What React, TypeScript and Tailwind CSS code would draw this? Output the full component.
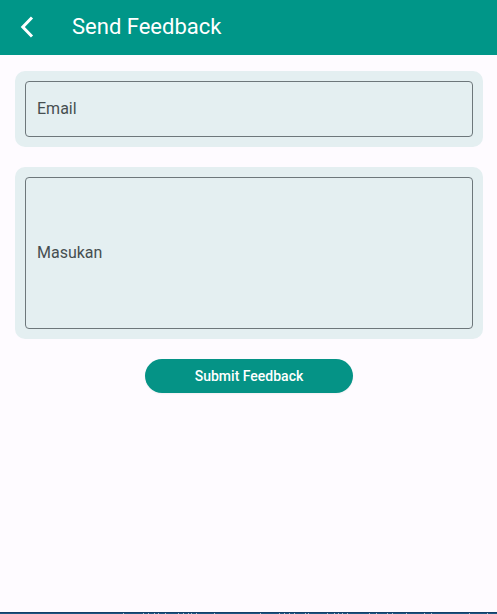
import React, { useState } from 'react';

const SPECKS = [123, 143, 148, 154, 158, 165, 178, 183, 188, 191, 196, 214, 260, 279, 284, 289, 294, 305, 308, 327, 334, 338, 342, 347, 369, 376, 387, 392, 406, 424, 431, 469, 487];

const labelClass =
  'pointer-events-none absolute inset-y-0 left-3 flex items-center text-base leading-5 text-[#464e50] peer-focus:invisible peer-[:not(:placeholder-shown)]:invisible';

export default function App() {
  const [email, setEmail] = useState('');
  const [feedback, setFeedback] = useState('');

  return (
    <div className="flex min-h-screen flex-col bg-[#fefbff] font-[Roboto,'Liberation_Sans',sans-serif]">
      <header className="flex h-[55px] items-center bg-[#009688] pb-px pl-3 text-white">
        <button type="button" aria-label="Back" className="flex size-8 items-center justify-center">
          <svg viewBox="0 0 32 32" className="size-8" fill="none" stroke="currentColor" strokeWidth="3" aria-hidden="true">
            <path d="M20 6.5 10.8 16 20 25.5" />
          </svg>
        </button>
        <h1 className="ml-7 text-[22px] leading-7">Send Feedback</h1>
      </header>

      <main className="flex-1 py-4 pr-3.5 pl-[15px]">
        <form className="flex flex-col gap-5" onSubmit={(event) => event.preventDefault()}>
          <div className="rounded-[10px] bg-[#e4eff1] p-2.5">
            <div className="relative">
              <input
                id="email"
                type="email"
                placeholder=" "
                value={email}
                onChange={(event) => setEmail(event.target.value)}
                className="peer block h-14 w-full rounded border border-[#6d777b] bg-transparent px-3 text-base text-[#191c1d] outline-none focus:border-[#009688]"
              />
              <label htmlFor="email" className={labelClass}>
                Email
              </label>
            </div>
          </div>

          <div className="rounded-[10px] bg-[#e4eff1] p-2.5">
            <div className="relative">
              <textarea
                id="feedback"
                placeholder=" "
                value={feedback}
                onChange={(event) => setFeedback(event.target.value)}
                className="peer block h-[152px] w-full resize-none rounded border border-[#6d777b] bg-transparent px-3 py-4 text-base text-[#191c1d] outline-none focus:border-[#009688]"
              />
              <label htmlFor="feedback" className={labelClass}>
                Masukan
              </label>
            </div>
          </div>

          <button
            type="submit"
            className="self-center rounded-full bg-[#059386] px-[50px] py-[7px] text-sm leading-5 font-medium text-white shadow-xs"
          >
            Submit Feedback
          </button>
        </form>
      </main>

      <footer className="h-0.5 overflow-hidden border-t border-[#123f68] bg-[#1d5580]">
        <svg width="497" height="1" className="block" aria-hidden="true">
          {SPECKS.map((x) => (
            <rect key={x} x={x} y="0" width="1" height="1" fill="#a9bfd0" />
          ))}
        </svg>
      </footer>
    </div>
  );
}
